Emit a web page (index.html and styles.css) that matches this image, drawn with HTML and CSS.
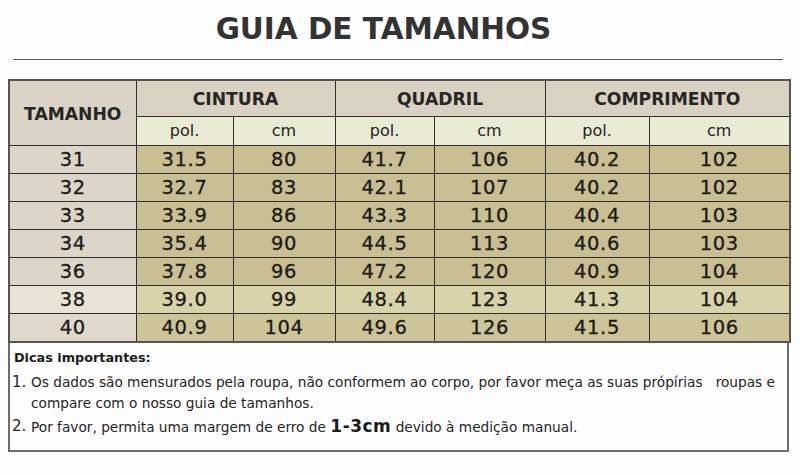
FILE: index.html
```html
<!DOCTYPE html>
<html lang="pt">
<head>
<meta charset="utf-8">
<title>Guia de Tamanhos</title>
<link rel="stylesheet" href="styles.css">
</head>
<body>
<div class="page">
  <h1 class="title">GUIA DE TAMANHOS</h1>
  <hr class="rule">
  <table class="sizes">
    <colgroup>
      <col class="c1"><col class="c2"><col class="c3"><col class="c4"><col class="c5"><col class="c6"><col class="c7">
    </colgroup>
    <thead>
      <tr class="h1row">
        <th rowspan="2" class="size-head">TAMANHO</th>
        <th colspan="2">CINTURA</th>
        <th colspan="2">QUADRIL</th>
        <th colspan="2">COMPRIMENTO</th>
      </tr>
      <tr class="h2row">
        <th>pol.</th><th>cm</th><th>pol.</th><th>cm</th><th>pol.</th><th>cm</th>
      </tr>
    </thead>
    <tbody>
      <tr><td class="size">31</td><td>31.5</td><td>80</td><td>41.7</td><td>106</td><td>40.2</td><td>102</td></tr>
      <tr><td class="size">32</td><td>32.7</td><td>83</td><td>42.1</td><td>107</td><td>40.2</td><td>102</td></tr>
      <tr><td class="size">33</td><td>33.9</td><td>86</td><td>43.3</td><td>110</td><td>40.4</td><td>103</td></tr>
      <tr><td class="size">34</td><td>35.4</td><td>90</td><td>44.5</td><td>113</td><td>40.6</td><td>103</td></tr>
      <tr><td class="size">36</td><td>37.8</td><td>96</td><td>47.2</td><td>120</td><td>40.9</td><td>104</td></tr>
      <tr class="light"><td class="size">38</td><td>39.0</td><td>99</td><td>48.4</td><td>123</td><td>41.3</td><td>104</td></tr>
      <tr class="mid"><td class="size">40</td><td>40.9</td><td>104</td><td>49.6</td><td>126</td><td>41.5</td><td>106</td></tr>
    </tbody>
  </table>
  <div class="notes">
    <p class="notes-title">Dicas importantes:</p>
    <ol class="notes-list">
      <li><span class="num">1.</span><span class="txt">Os dados são mensurados pela roupa, não conformem ao corpo, por favor meça as suas própírias&nbsp;&nbsp; roupas e compare com o nosso guia de tamanhos.</span></li>
      <li><span class="num">2.</span><span class="txt">Por favor, permita uma margem de erro de <b class="big">1-3cm</b> devido à medição manual.</span></li>
    </ol>
  </div>
</div>
</body>
</html>
```
FILE: styles.css
```css
html, body {
  margin: 0;
  padding: 0;
  background: #fefdfe;
}
body {
  font-family: "DejaVu Sans", Verdana, sans-serif;
  color: #1e1e1e;
}
.page {
  padding: 0 11px 0 8px;
}
.title {
  margin: 0;
  padding: 11px 30px 0 0;
  height: 37px;
  text-align: center;
  font-size: 29.5px;
  font-weight: bold;
  color: #333333;
  line-height: 37px;
}
.rule {
  margin: 11px 6px 0 5px;
  border: 0;
  border-top: 1px solid #5a5a5a;
  height: 0;
}
.sizes {
  margin-top: 19px;
  width: 781px;
  border-collapse: collapse;
  table-layout: fixed;
  border: 2px solid #555;
}
.c1 { width: 127px; }
.c2 { width: 97px; }
.c3 { width: 102px; }
.c4 { width: 99px; }
.c5 { width: 111px; }
.c6 { width: 104px; }
.c7 { width: 141px; }
.sizes th, .sizes td {
  border: 1px solid #2e2e2a;
  padding: 0;
  text-align: center;
}
.h1row th {
  height: 35px;
  background: #d9d1c1;
  font-size: 17.2px;
  font-weight: bold;
  color: #262626;
  line-height: 20px;
}
.h1row .size-head {
  background: #dbd3c5;
  padding-top: 2px;
}
.h2row th {
  height: 28px;
  background: #eaebd5;
  font-size: 16px;
  font-weight: normal;
  color: #222;
  line-height: 18px;
}
.sizes td {
  height: 27px;
  background: #c9bf92;
  font-size: 19.5px;
  color: #1b1b1b;
  line-height: 20px;
  letter-spacing: 0.6px;
  -webkit-text-stroke: 0.3px #1b1b1b;
}
.sizes td.size {
  background: #ddd5c8;
}
.sizes tr.light td {
  background: #d8d3a9;
}
.sizes tr.light td.size {
  background: #e9e3d5;
}
.sizes tr.mid td {
  background: #cdc597;
}
.sizes tr.mid td.size {
  background: #e0d8cb;
}
.notes {
  width: 777px;
  height: 107px;
  border: 2px solid #6c6c6c;
  border-top: 0;
  background: #fdfcfd;
}
.notes-title {
  margin: 0;
  padding: 6px 0 0 4px;
  font-size: 12.8px;
  font-weight: bold;
  line-height: 18px;
  color: #1c1c1c;
}
.notes-list {
  list-style: none;
  margin: 5px 0 0 0;
  padding: 0 0 0 2px;
}
.notes-list li {
  display: flex;
  font-size: 13.7px;
  line-height: 21px;
  color: #252525;
  margin-bottom: 2px;
}
.notes-list .num {
  width: 19px;
  flex: none;
  font-size: 15px;
}
.notes-list .txt {
  flex: 1;
  padding-right: 6px;
}
.big {
  font-size: 17px;
  font-weight: bold;
  letter-spacing: 0.5px;
  color: #1a1a1a;
}
```
